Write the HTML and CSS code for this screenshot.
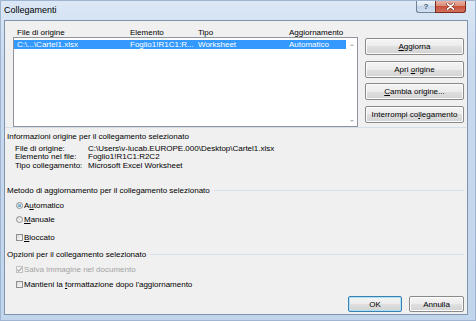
FILE: index.html
```html
<!DOCTYPE html>
<html lang="it">
<head>
    <meta charset="UTF-8">
    <title>Collegamenti</title>
    <link rel="stylesheet" href="styles.css">
</head>
<body>
    <div class="window">
        <div class="titlebar">
            <span class="title">Collegamenti</span>
            <div class="caption-buttons">
                <span class="cap-btn help">?</span>
                <span class="cap-btn close">
                    <svg width="9" height="7" viewBox="0 0 9 7"><path d="M1.5 0.8 L7.5 6.2 M7.5 0.8 L1.5 6.2" stroke="#5a1d14" stroke-width="2.6" stroke-linecap="round"/><path d="M1.5 0.8 L7.5 6.2 M7.5 0.8 L1.5 6.2" stroke="#fff" stroke-width="1.6" stroke-linecap="round"/></svg>
                </span>
            </div>
        </div>

        <div class="client">
            <div class="links-area">
                <div class="links">
                    <div class="col-heads">
                        <span class="col c1">File di origine</span>
                        <span class="col c2">Elemento</span>
                        <span class="col c3">Tipo</span>
                        <span class="col c4">Aggiornamento</span>
                    </div>
                    <div class="listbox">
                        <div class="rows">
                            <div class="row selected">
                                <span class="col c1">C:\...\Cartel1.xlsx</span>
                                <span class="col c2">Foglio1!R1C1:R...</span>
                                <span class="col c3">Worksheet</span>
                                <span class="col c4">Automatico</span>
                            </div>
                        </div>
                        <div class="scrollbar">
                            <span class="arrow up"></span>
                            <span class="arrow down"></span>
                        </div>
                    </div>
                </div>
                <div class="side-buttons">
                    <button class="btn"><span><u>A</u>ggiorna</span></button>
                    <button class="btn"><span>Apri <u>o</u>rigine</span></button>
                    <button class="btn"><span><u>C</u>ambia origine...</span></button>
                    <button class="btn"><span>Interrompi co<u>l</u>legamento</span></button>
                </div>
            </div>

            <div class="info">
                <div class="plain-head">Informazioni origine per il collegamento selezionato</div>
                <div class="info-grid">
                    <span>File di origine:</span><span>C:\Users\v-lucab.EUROPE.000\Desktop\Cartel1.xlsx</span>
                    <span>Elemento nel file:</span><span>Foglio1!R1C1:R2C2</span>
                    <span>Tipo collegamento:</span><span>Microsoft Excel Worksheet</span>
                </div>
            </div>

            <div class="group method">
                <div class="group-head">Metodo di aggiornamento per il collegamento selezionato</div>
                <div class="opt opt-auto"><span class="radio on"></span><span class="opt-text">A<u>u</u>tomatico</span></div>
                <div class="opt opt-manual"><span class="radio"></span><span class="opt-text"><u>M</u>anuale</span></div>
                <div class="opt opt-lock"><span class="check"></span><span class="opt-text"><u>B</u>loccato</span></div>
            </div>

            <div class="group options">
                <div class="group-head">Opzioni per il collegamento selezionato</div>
                <div class="opt opt-save disabled">
                    <span class="check checked">
                        <svg width="7" height="7" viewBox="0 0 7 7"><path d="M1.3 3.6 L2.8 5.1 L5.8 1.6" fill="none" stroke="#a8a8a8" stroke-width="1.1"/></svg>
                    </span>
                    <span class="opt-text">Salva immagine nel documento</span>
                </div>
                <div class="opt opt-keep"><span class="check"></span><span class="opt-text">Mantieni la <u>f</u>ormattazione dopo l'aggiornamento</span></div>
            </div>

            <div class="footer">
                <button class="btn default ok"><span>OK</span></button>
                <button class="btn cancel"><span>Annulla</span></button>
            </div>
        </div>
    </div>
</body>
</html>
```

FILE: styles.css
```css
body {
    margin: 0;
    font-family: "Liberation Sans", Arial, sans-serif;
    font-size: 8px;
    color: #000;
}
.window {
    width: 476px;
    height: 321px;
    box-sizing: border-box;
    border: 1px solid #9fb5d1;
    background: linear-gradient(#dbe7f5, #c8daee 20%, #c1d5ec);
    display: flex;
    flex-direction: column;
}

/* title bar */
.titlebar {
    height: 19px;
    display: flex;
    align-items: flex-start;
}
.title {
    flex: 1;
    padding-left: 3px;
    font-size: 9px;
    line-height: 18px;
}
.caption-buttons {
    display: flex;
    margin-right: 9px;
}
.cap-btn {
    height: 12px;
    box-sizing: border-box;
    display: flex;
    align-items: center;
    justify-content: center;
    border: 1px solid #6f8199;
    border-top: none;
}
.help {
    width: 19px;
    border-right: none;
    border-radius: 0 0 0 3px;
    background: linear-gradient(#eef3f9, #d6e2f0 50%, #c2d3e8 50%, #d3e1f1);
    color: #3f5573;
    font-size: 8px;
    font-weight: bold;
}
.close {
    width: 31px;
    border-color: #7a2a1e;
    border-radius: 0 0 3px 0;
    background: linear-gradient(#eab0a3, #dc8b78 45%, #c7503a 50%, #d4735e);
}

/* client area */
.client {
    margin: 0 7px 0 3px;
    height: 295px;
    box-sizing: border-box;
    border: 1px solid #8194ad;
    background: #f0f0f0;
    display: flex;
    flex-direction: column;
}
.links-area {
    display: flex;
    align-items: flex-start;
    padding: 7px 0 0 8px;
    margin-right: 1px;
    border-bottom: 1px solid #d5dfe5;
}
.links {
    width: 345px;
}
.col-heads {
    display: flex;
    height: 9px;
    line-height: 9px;
    padding-left: 4px;
}
.col {
    white-space: nowrap;
}
.c1 { width: 113px; }
.c2 { width: 68px; }
.c3 { width: 91px; }
.listbox {
    height: 90px;
    box-sizing: border-box;
    border: 1px solid #8e959e;
    background: #fff;
    display: flex;
}
.rows {
    flex: 1;
    padding-top: 2px;
}
.row {
    display: flex;
    height: 9px;
    line-height: 9px;
    padding-left: 3px;
}
.row.selected {
    background: #3399ff;
    color: #fff;
}
.scrollbar {
    width: 11px;
    box-sizing: border-box;
    padding: 6px 0 4px;
    display: flex;
    flex-direction: column;
    justify-content: space-between;
    align-items: center;
}
.arrow {
    width: 0;
    height: 0;
    border-left: 2px solid transparent;
    border-right: 2px solid transparent;
}
.arrow.up {
    border-bottom: 2px solid #b4b4b4;
}
.arrow.down {
    border-top: 2px solid #b4b4b4;
}

/* buttons */
.btn {
    box-sizing: border-box;
    height: 17px;
    padding: 0;
    border: 1px solid #8a8a8a;
    border-radius: 2px;
    background: linear-gradient(#f4f4f4, #ececec 50%, #e0e0e0 50%, #d3d3d3);
    box-shadow: inset 0 0 0 1px #fbfbfb;
    font-family: inherit;
    font-size: 8px;
    color: #000;
    display: flex;
    align-items: center;
    justify-content: center;
    white-space: nowrap;
}
.side-buttons {
    display: flex;
    flex-direction: column;
    gap: 5.5px;
    margin: 10px 0 0 7px;
}
.side-buttons .btn {
    width: 99px;
}
.btn.default {
    border-color: #3c7fb1;
    box-shadow: inset 0 0 0 1px #a8e0f7;
}

/* source info */
.info {
    padding: 4px 0 0 2px;
}
.plain-head {
    line-height: 9px;
}
.info-grid {
    display: grid;
    grid-template-columns: 73px auto;
    line-height: 8.4px;
    margin-top: 4px;
    padding-left: 8px;
}

/* groups */
.group-head {
    display: flex;
    align-items: center;
    line-height: 9px;
    padding-left: 2px;
    margin-right: 3px;
}
.group-head::after {
    content: "";
    flex: 1;
    margin-left: 4px;
    border-top: 1px solid #d5dfe5;
}
.method { margin-top: 15.3px; }
.options { margin-top: 8px; }
.opt {
    display: flex;
    align-items: center;
    height: 9px;
    line-height: 9px;
    padding-left: 11px;
}
.opt-text {
    margin-left: 1px;
}
.opt-auto { margin-top: 6px; }
.opt-manual { margin-top: 5px; }
.opt-lock { margin-top: 9px; }
.opt-save { margin-top: 6.5px; }
.opt-keep { margin-top: 5.5px; }
.disabled {
    color: #a3a3a3;
}
.radio {
    width: 7px;
    height: 7px;
    box-sizing: border-box;
    border-radius: 50%;
    border: 1px solid #8f8f8f;
    background: linear-gradient(135deg, #d8d8d8, #fbfbfb);
    display: flex;
    align-items: center;
    justify-content: center;
}
.radio.on::after {
    content: "";
    width: 3px;
    height: 3px;
    border-radius: 50%;
    background: radial-gradient(circle at 40% 35%, #8fd3f7, #1d66a8);
}
.check {
    width: 7px;
    height: 7px;
    box-sizing: border-box;
    border: 1px solid #8e8f8f;
    background: linear-gradient(135deg, #d9d9d9, #fbfbfb);
    position: relative;
}
.check.checked {
    border-color: #c2c2c2;
    background: #f4f4f4;
}
.check svg {
    position: absolute;
    left: -1px;
    top: -1px;
}

/* dialog buttons */
.footer {
    display: flex;
    justify-content: flex-end;
    gap: 7px;
    margin: 7.5px 3px 0 0;
}
.footer .btn {
    height: 16px;
}
.ok { width: 54px; }
.cancel { width: 55px; }
```
